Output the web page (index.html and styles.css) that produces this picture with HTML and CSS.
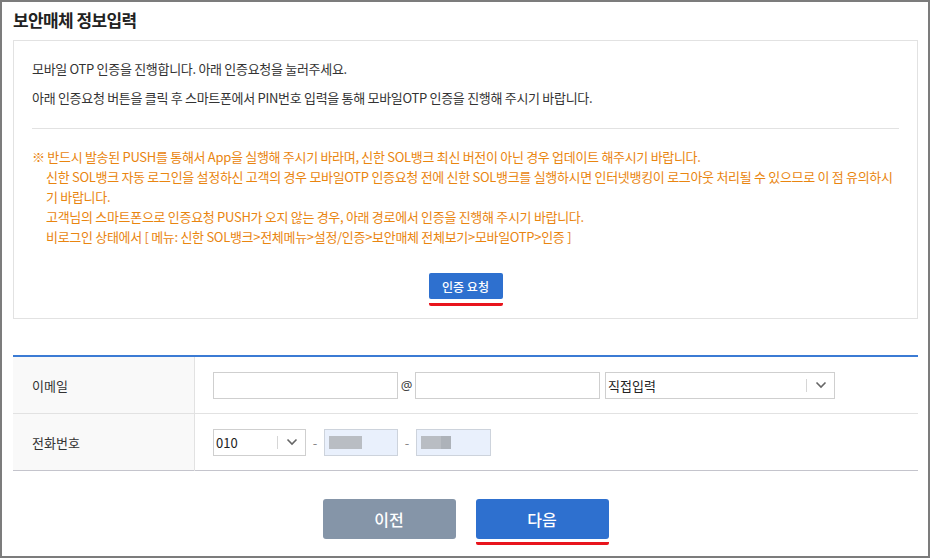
FILE: index.html
```html
<!DOCTYPE html>
<html>
<head>
	<title>보안매체 정보입력</title>
	<link rel="stylesheet" href="styles.css">
</head>
<body>
	<div class="frame">
		<h2 class="title">보안매체 정보입력</h2>
		<div class="info-box">
			<p class="desc">모바일 OTP 인증을 진행합니다. 아래 인증요청을 눌러주세요.</p>
			<p class="desc">아래 인증요청 버튼을 클릭 후 스마트폰에서 PIN번호 입력을 통해 모바일OTP 인증을 진행해 주시기 바랍니다.</p>
			<hr class="divider">
			<ul class="notice">
				<li class="first">※ 반드시 발송된 PUSH를 통해서 App을 실행해 주시기 바라며, 신한 SOL뱅크 최신 버전이 아닌 경우 업데이트 해주시기 바랍니다.</li>
				<li>신한 SOL뱅크 자동 로그인을 설정하신 고객의 경우 모바일OTP 인증요청 전에 신한 SOL뱅크를 실행하시면 인터넷뱅킹이 로그아웃 처리될 수 있으므로 이 점 유의하시기 바랍니다.</li>
				<li>고객님의 스마트폰으로 인증요청 PUSH가 오지 않는 경우, 아래 경로에서 인증을 진행해 주시기 바랍니다.</li>
				<li>비로그인 상태에서 [ 메뉴: 신한 SOL뱅크&gt;전체메뉴&gt;설정/인증&gt;보안매체 전체보기&gt;모바일OTP&gt;인증 ]</li>
			</ul>
			<div class="center">
				<span class="marked small-mark"><button class="btn-small">인증 요청</button></span>
			</div>
		</div>

		<table class="form-table">
			<tr>
				<th>이메일</th>
				<td>
					<div class="field-row">
						<input class="input w186" type="text">
						<span class="at">@</span>
						<input class="input w185" type="text">
						<div class="select w230">
							<span>직접입력</span>
							<span class="sel-arrow">
								<svg width="12" height="8" viewBox="0 0 12 8"><path d="M1.5 1.5 L6 6 L10.5 1.5" fill="none" stroke="#666" stroke-width="1.6"/></svg>
							</span>
						</div>
					</div>
				</td>
			</tr>
			<tr>
				<th>전화번호</th>
				<td>
					<div class="field-row">
						<div class="select w93">
							<span>010</span>
							<span class="sel-arrow">
								<svg width="12" height="8" viewBox="0 0 12 8"><path d="M1.5 1.5 L6 6 L10.5 1.5" fill="none" stroke="#666" stroke-width="1.6"/></svg>
							</span>
						</div>
						<span class="dash">-</span>
						<div class="input masked w74"><span class="mask m1"></span></div>
						<span class="dash">-</span>
						<div class="input masked w75"><span class="mask m2"></span><span class="mask m3"></span></div>
					</div>
				</td>
			</tr>
		</table>

		<div class="actions">
			<span class="big-wrap"><button class="btn-big gray">이전</button></span>
			<span class="marked big-wrap"><button class="btn-big blue">다음</button></span>
		</div>
	</div>
</body>
</html>
```

FILE: styles.css
```css
body {
	margin: 0;
	padding: 0;
	background-color: #fff;
	font-family: "Noto Sans CJK KR", "Noto Sans", sans-serif;
	font-size: 13px;
	color: #333;
}

.frame {
	box-sizing: border-box;
	width: 930px;
	height: 558px;
	border: 2px solid #7c7c7c;
	padding: 0 10px 0 11px;
}

.title {
	margin: 0;
	padding-top: 7px;
	height: 31px;
	font-size: 17px;
	font-weight: bold;
	color: #222;
	line-height: 22px;
	letter-spacing: -0.6px;
}

.info-box {
	border: 1px solid #e2e2e2;
	padding: 18px 18px 12px 18px;
}

.desc {
	margin: 0 0 9px 0;
	line-height: 20px;
	letter-spacing: -0.3px;
}

.divider {
	border: none;
	border-top: 1px solid #e2e2e2;
	margin: 20px 0 18px 0;
}

.notice {
	list-style: none;
	margin: 0;
	padding: 0 0 0 14px;
	color: #e9850f;
	line-height: 20px;
	letter-spacing: -0.3px;
}

.notice .first {
	margin-left: -14px;
}

.center {
	text-align: center;
	margin-top: 26px;
	line-height: 0;
}

.marked {
	display: inline-block;
	border-bottom: 3px solid #e8141c;
	border-radius: 2px;
	line-height: 0;
}

.small-mark {
	padding-bottom: 4px;
}

.btn-small {
	width: 74px;
	height: 26px;
	border: none;
	border-radius: 2px;
	background-color: #2e70cf;
	color: #fff;
	font-family: inherit;
	font-size: 12px;
	font-weight: 500;
	padding: 0;
	cursor: pointer;
	vertical-align: top;
}

.form-table {
	width: 100%;
	margin-top: 36px;
	border-collapse: collapse;
	border-top: 2px solid #3b7bd4;
	border-bottom: 1px solid #c4c4cc;
}

.form-table th {
	width: 162px;
	padding: 0 0 0 19px;
	height: 56px;
	text-align: left;
	font-weight: normal;
	background-color: #f9f9f9;
	border-right: 1px solid #e2e2e2;
	color: #333;
}

.form-table tr + tr th,
.form-table tr + tr td {
	border-top: 1px solid #e2e2e2;
}

.form-table td {
	padding: 0 0 0 18px;
	height: 56px;
}

.field-row {
	display: flex;
	align-items: center;
}

.input {
	box-sizing: border-box;
	height: 27px;
	border: 1px solid #cfcfcf;
	background-color: #fff;
	margin: 0;
	padding: 0 5px;
	font-family: inherit;
}

.w186 { width: 185px; }
.w185 { width: 185px; }
.w230 { width: 230px; }
.w93 { width: 93px; }
.w74 { width: 74px; }
.w75 { width: 75px; }

.at {
	width: 17px;
	text-align: center;
	color: #444;
	font-family: "Noto Sans", sans-serif;
	font-size: 13px;
}

.select {
	box-sizing: border-box;
	height: 27px;
	border: 1px solid #cfcfcf;
	margin-left: 5px;
	display: flex;
	align-items: center;
	justify-content: space-between;
	padding-left: 2px;
	font-size: 13px;
	color: #222;
}

.w93.select {
	margin-left: 0;
}

.sel-arrow {
	display: flex;
	align-items: center;
	height: 13px;
	border-left: 1px solid #d6d6d6;
	padding: 0 7px 0 8px;
}

.dash {
	width: 18px;
	text-align: center;
	color: #888;
}

.masked {
	background-color: #e9f0fc;
	border-color: #cdd3dc;
	display: flex;
	align-items: center;
	padding: 0 0 0 4px;
}

.mask {
	display: block;
	height: 13px;
	background-color: #b9bdc3;
}

.m1 { width: 33px; }
.m2 { width: 20px; }
.m3 { width: 10px; background-color: #adb2b9; }

.actions {
	display: flex;
	justify-content: center;
	align-items: flex-start;
	gap: 20px;
	margin-top: 28px;
}

.big-wrap {
	display: inline-block;
	line-height: 0;
	padding-bottom: 3px;
}

.big-wrap.marked {
	padding-bottom: 3px;
}

.btn-big {
	width: 133px;
	height: 40px;
	border: none;
	border-radius: 3px;
	color: #fff;
	font-family: inherit;
	font-size: 16px;
	font-weight: 500;
	padding: 0;
	cursor: pointer;
	vertical-align: top;
}

.btn-big.gray {
	background-color: #8595a8;
}

.btn-big.blue {
	background-color: #2e70cf;
}
```
